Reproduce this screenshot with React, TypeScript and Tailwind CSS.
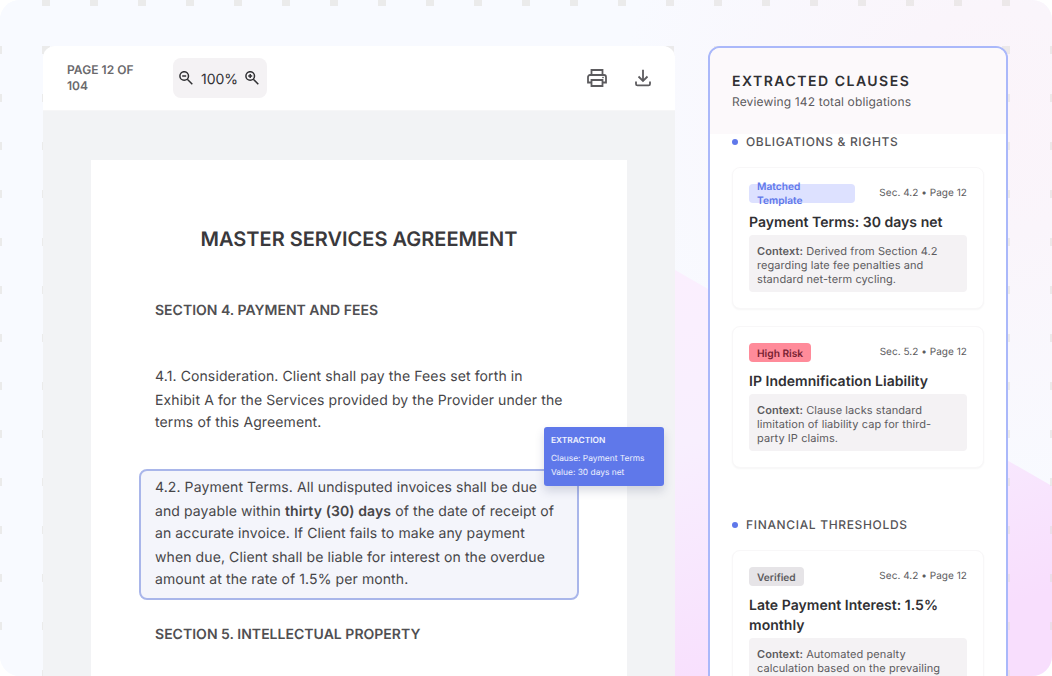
import React from "react";

type Clause = { tag: string; tagClass: string; sec: string; title: string; context: string; height: string };

const first: Clause[] = [
  { tag: "Matched Template", tagClass: "w-[106px] bg-[#dde1ff] text-[#5f78ea]", sec: "Sec. 4.2 • Page 12", title: "Payment Terms: 30 days net", context: "Derived from Section 4.2 regarding late fee penalties and standard net-term cycling.", height: "h-[142px]" },
  { tag: "High Risk", tagClass: "bg-[#ff8b9a] pt-0.5 text-[#782232]", sec: "Sec. 5.2 • Page 12", title: "IP Indemnification Liability", context: "Clause lacks standard limitation of liability cap for third-\nparty IP claims.", height: "h-[142px]" },
];
const second: Clause[] = [
  { tag: "Verified", tagClass: "bg-[#e6e4e7] pt-0.5 text-[#5c5b5e]", sec: "Sec. 4.2 • Page 12", title: "Late Payment Interest: 1.5% monthly", context: "Automated penalty calculation based on the prevailing rate.", height: "h-[163px]" },
];

function ZoomIcon({ plus }: { plus?: boolean }) {
  return (
    <svg width="14" height="14" viewBox="0 0 14 14" fill="none" stroke="#303033" strokeWidth="1.5">
      <circle cx="5.200" cy="5" r="4.300" />
      <path d="M8.300 8.200 13.300 13.200M3.200 5h4" />
      {plus && <path d="M5.200 3v4" />}
    </svg>
  );
}

function Lines({ lines }: { lines: React.ReactNode[] }) {
  return (
    <p className="leading-[22px] whitespace-nowrap">
      {lines.map((line, i) => (
        <span key={i} className={i % 2 === 0 ? "block h-6" : "block h-[22px]"}>{line}</span>
      ))}
    </p>
  );
}

function SectionLabel({ text }: { text: string }) {
  return (
    <div className="flex h-4 items-center gap-2 text-[12px] font-medium tracking-[0.66px] text-[#555457]">
      <span className="size-1.5 rounded-full bg-[#5f78ea]" />
      {text}
    </div>
  );
}

function Card({ c }: { c: Clause }) {
  return (
    <div className={`${c.height} shrink-0 rounded-lg border border-[#f8f7f8] bg-white px-4 pt-4 shadow-[0_1px_2px_rgba(0,0,0,0.04)]`}>
      <div className="flex justify-between">
        <div className={`flex h-[19px] items-center rounded-[4px] px-2 text-[10.2px] leading-[14px] font-semibold ${c.tagClass}`}>{c.tag}</div>
        <div className="pt-px text-[10px] leading-[16px] tracking-[0.04px] text-[#5c5b5e]">{c.sec}</div>
      </div>
      <h3 className="mt-[10px] text-[14px] leading-5 font-semibold tracking-[0.03px] text-[#303033]">{c.title}</h3>
      <p className="mt-[2px] min-h-[57px] rounded-[4px] bg-[#f4f2f4] px-2 pt-[9px] text-[11px] leading-[14px] tracking-[0.07px] whitespace-pre-line text-[#5c5b5e]">
        <span className="font-semibold">Context:</span> {c.context}
      </p>
    </div>
  );
}

export default function App() {
  return (
    <div className="h-[676px] w-[1052px] overflow-hidden bg-white font-['Inter',sans-serif] antialiased [text-rendering:geometricPrecision]">
      <div className="relative h-full overflow-hidden rounded-[20px] bg-[#f8faff]">
        <svg className="absolute inset-0" width="1052" height="676">
          <defs>
            <linearGradient id="pink" x1="0" y1="0" x2="0.3" y2="1">
              <stop offset="0" stopColor="#fbeffe" />
              <stop offset="0.4" stopColor="#f8effe" />
              <stop offset="1" stopColor="#f8defd" />
            </linearGradient>
            <radialGradient id="blush" gradientUnits="userSpaceOnUse" cx="1000" cy="120" r="380">
              <stop offset="0" stopColor="#fbf4fa" />
              <stop offset="0.3" stopColor="#faf5fb" />
              <stop offset="1" stopColor="#f8faff" />
            </radialGradient>
            <pattern id="grid" x="42" y="46" width="48" height="48" patternUnits="userSpaceOnUse">
              <rect width="8" height="8" fill="#dedcd8" fillOpacity="0.5" />
            </pattern>
          </defs>
          <rect width="1052" height="676" fill="url(#blush)" />
          <path d="M675 270 1052 486V676H675Z" fill="url(#pink)" />
          <rect width="1052" height="676" fill="url(#grid)" />
        </svg>
        <div className="relative flex h-full items-start pt-[46px] pl-[43px]">
          <main className="flex h-[660px] w-[632px] flex-col overflow-hidden rounded-t-xl bg-[#f2f3f5]">
            <header className="flex h-[65px] shrink-0 items-center border-b border-[#f6f6f7] bg-white pr-[23px] pl-6">
              <div className="w-[106px] text-[12px] leading-4 font-semibold tracking-[0.05px] text-[#6a696c]">PAGE 12 OF<br />104</div>
              <div className="flex h-10 w-[94px] items-center justify-center gap-[7px] rounded-lg bg-[#f4f2f4] pr-0.5 text-[14px] text-[#303033]">
                <ZoomIcon /><span className="pt-0.5 pl-px">100%</span><ZoomIcon plus />
              </div>
              <div className="ml-auto flex items-center gap-[26px]">
                <svg width="22" height="20" viewBox="0 0 22 20" fill="none" stroke="#5c5b5e" strokeWidth="1.8">
                  <path d="M5.500 6V2h11v4M5.500 14.500H2V9a2 2 0 0 1 2-2h14a2 2 0 0 1 2 2v5.500h-3.500M5.500 12h11v6h-11z" />
                  <circle cx="17" cy="9.500" r=".5" strokeWidth="1" />
                </svg>
                <svg width="18" height="18" viewBox="0 0 18 18" fill="none" stroke="#5c5b5e" strokeWidth="1.8">
                  <path d="M9 .8v11M4.500 7.500 9 12l4.500-4.500M2 12.500V15a1.400 1.400 0 0 0 1.400 1.400h11.200A1.400 1.400 0 0 0 16 15v-2.500" />
                </svg>
              </div>
            </header>
            <article className="mt-[49px] ml-12 h-[530px] w-[536px] shrink-0 bg-white px-12 text-[14px] text-[#464548]">
              <h1 className="pt-[65px] text-center text-[20px] leading-7 font-semibold text-[#3a393c]">MASTER SERVICES AGREEMENT</h1>
              <h2 className="mt-[46px] ml-4 leading-[23px] font-semibold text-[#504f52]">SECTION 4. PAYMENT AND FEES</h2>
              <div className="mt-11 ml-4 h-[69px] tracking-[0.115px]">
                <Lines lines={["4.1. Consideration. Client shall pay the Fees set forth in", "Exhibit A for the Services provided by the Provider under the", "terms of this Agreement."]} />
              </div>
              <div className="relative mt-[34px] h-[131px] w-[440px] rounded-lg border-2 border-[#a9b6ea] bg-[#f4f5fb] pt-[6px] pl-[14px] tracking-[0.1px]">
                <Lines lines={[
                  "4.2. Payment Terms. All undisputed invoices shall be due",
                  <>and payable within <b className="font-semibold">thirty (30) days</b> of the date of receipt of</>,
                  "an accurate invoice. If Client fails to make any payment",
                  "when due, Client shall be liable for interest on the overdue",
                  "amount at the rate of 1.5% per month.",
                ]} />
                <aside className="absolute top-[-44px] left-[403px] h-[59px] w-[120px] rounded-[3px] bg-[#5f78ea] px-[7px] pt-[7px] text-[8.400px] leading-[14px] tracking-normal text-white/90 shadow-[0_5px_10px_rgba(50,60,100,0.18)]">
                  <div className="mb-1 text-[8.400px] font-semibold">EXTRACTION</div>
                  <div>Clause: Payment Terms</div>
                  <div>Value: 30 days net</div>
                </aside>
              </div>
              <h2 className="mt-[23px] ml-4 leading-[23px] font-semibold tracking-[0.02px] text-[#504f52]">SECTION 5. INTELLECTUAL PROPERTY</h2>
            </article>
          </main>
          <section className="ml-[33px] flex h-[760px] w-[300px] flex-col overflow-hidden rounded-xl border-2 border-[#aab8fa] bg-white">
            <header className="h-[86px] shrink-0 bg-[#fcf9fb] px-[22px] pt-[24px]">
              <h2 className="text-[14px] leading-5 font-semibold tracking-[1.5px] text-[#303033]">EXTRACTED CLAUSES</h2>
              <p className="mt-[2px] text-[12px] leading-4 tracking-[0.15px] text-[#5c5b5e]">Reviewing 142 total obligations</p>
            </header>
            <div className="flex flex-col px-[22px]">
              <SectionLabel text="OBLIGATIONS & RIGHTS" />
              <div className="mt-[17px] flex flex-col gap-[17px]">{first.map((c) => <Card key={c.title} c={c} />)}</div>
              <div className="mt-[49px] mb-[17px]"><SectionLabel text="FINANCIAL THRESHOLDS" /></div>
              {second.map((c) => <Card key={c.title} c={c} />)}
            </div>
          </section>
        </div>
      </div>
    </div>
  );
}
